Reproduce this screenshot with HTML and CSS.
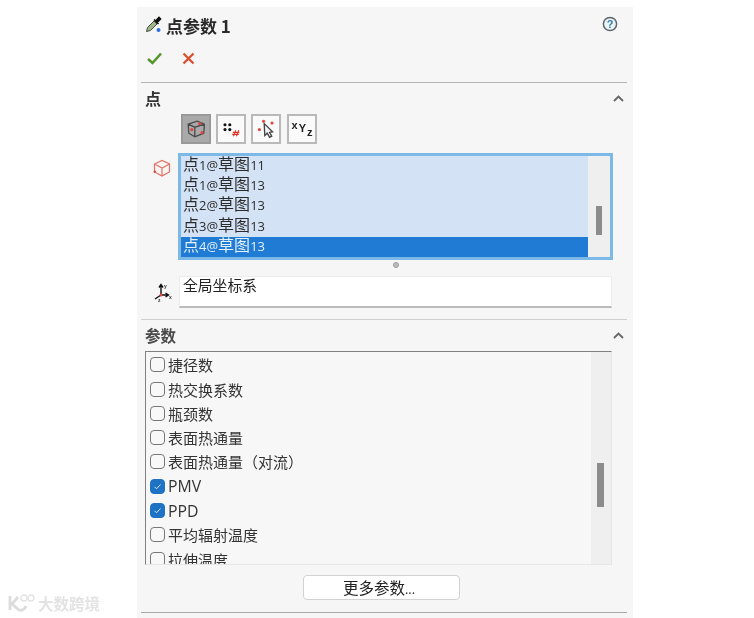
FILE: index.html
```html
<!DOCTYPE html>
<html lang="zh">
<head>
<meta charset="utf-8">
<title>点参数 1</title>
<link rel="stylesheet" href="styles.css">
</head>
<body>
<main class="panel">
  <header class="title">
    <svg class="title-icon" viewBox="0 0 17 18" width="17" height="18">
      <path d="M1.500 15.500 L2.500 11.500 L9 5 L12 8 L5.500 14.500 Z" fill="#9db58a" stroke="#4c4c3c" stroke-width="1"/>
      <path d="M9 3.500 L13.500 8 M10.500 5 L14 1.500 L15.500 3 L12 6.500 Z" fill="#111" stroke="#111" stroke-width="1.600"/>
      <circle cx="13.500" cy="14" r="2" fill="#2f6fe0"/>
    </svg>
    <h1 class="title-text">点参数 1</h1>
    <svg class="help" viewBox="0 0 16 16" width="16" height="16">
      <circle cx="8" cy="8" r="6.600" fill="#eef3f6" stroke="#5c666c" stroke-width="1.500"/>
      <text x="8" y="12" text-anchor="middle" class="help-mark">?</text>
    </svg>
  </header>
  <div class="actions">
    <svg viewBox="0 0 15 13" width="15" height="13"><path d="M1 7 L5.500 11 L14 1.500" fill="none" stroke="#55952b" stroke-width="2.600"/></svg>
    <svg viewBox="0 0 13 13" width="13" height="13"><path d="M1.500 1.500 L11.500 11.500 M11.500 1.500 L1.500 11.500" fill="none" stroke="#d9502f" stroke-width="2.300"/></svg>
  </div>
  <hr class="rule rule-top">
  <div class="section-head">
    <h2 class="section-title">点</h2>
    <svg class="chevron" viewBox="0 0 11 7" width="11" height="7"><path d="M1 6 L5.500 1.500 L10 6" fill="none" stroke="#666" stroke-width="1.800"/></svg>
  </div>
  <div class="tools">
    <button class="tool tool-on">
      <svg viewBox="0 0 20 20" width="24" height="24">
        <path d="M3.500 6 L11 3.500 L17 6 L16.500 13.500 L9 16.500 L4 13.500 Z M3.500 6 L9 8.500 L17 6 M9 8.500 L9 16.500" fill="none" stroke="#4a4a4a" stroke-width="1.100"/>
        <circle cx="6.500" cy="10.500" r="1.300" fill="#e2453c"/><circle cx="13" cy="5.500" r="1.300" fill="#e2453c"/><circle cx="15" cy="13" r="1.300" fill="#e2453c"/>
      </svg>
    </button>
    <button class="tool">
      <svg viewBox="0 0 20 20" width="24" height="24">
        <g fill="#111"><circle cx="5" cy="6.500" r="1.300"/><circle cx="9" cy="6.500" r="1.300"/><circle cx="5" cy="10.500" r="1.300"/><circle cx="9" cy="10.500" r="1.300"/></g>
        <path d="M12 16 L14 11 M14.500 16 L16.500 11 M11.500 12.800 L17 12.800 M11 14.500 L16.500 14.500" stroke="#e5352b" stroke-width="0.900" fill="none"/>
      </svg>
    </button>
    <button class="tool">
      <svg viewBox="0 0 20 20" width="24" height="24">
        <path d="M8.500 5.500 L9 15.500 L11 13.500 L13 17 L14.800 16 L13 12.800 L15.500 12.300 Z" fill="#f4f4f4" stroke="#444" stroke-width="1.100"/>
        <circle cx="4.500" cy="10.500" r="1.300" fill="#e2453c"/><circle cx="8" cy="3.500" r="1.300" fill="#e2453c"/><circle cx="15" cy="5" r="1.300" fill="#e2453c"/>
      </svg>
    </button>
    <button class="tool tool-xyz"><span class="x">x</span><span class="y">Y</span><span class="z">z</span></button>
  </div>

  <div class="select-row">
    <svg class="cube" viewBox="0 0 18 18" width="18" height="18">
      <path d="M1.500 5 L9 1.500 L16.500 5 L16.500 13 L9 17 L1.500 13 Z M1.500 5 L9 9 L16.500 5 M9 9 L9 17" fill="#fdf3f1" stroke="#e07468" stroke-width="1.200"/>
      <circle cx="1.800" cy="12.800" r="1.200" fill="#d9483b"/>
    </svg>
    <div class="selection">
      <ul class="sel-rows">
        <li class="sel-row">点<span class="lat">1@</span>草图<span class="lat">11</span></li>
        <li class="sel-row">点<span class="lat">1@</span>草图<span class="lat">13</span></li>
        <li class="sel-row">点<span class="lat">2@</span>草图<span class="lat">13</span></li>
        <li class="sel-row">点<span class="lat">3@</span>草图<span class="lat">13</span></li>
        <li class="sel-row sel-active">点<span class="lat">4@</span>草图<span class="lat">13</span></li>
      </ul>
      <div class="track track-sel"><div class="thumb thumb-sel"></div></div>
    </div>
  </div>
  <div class="grip-row"><span class="grip"></span></div>

  <div class="coord-row">
    <svg class="axes" viewBox="0 0 20 20" width="20" height="20">
      <path d="M9 13 L9 3 M7 5.500 L9 2.500 L11 5.500 M9 13 L16 13 M13.500 11 L16.500 13 L13.500 15 M9 13 L3 17" fill="none" stroke="#111" stroke-width="1.400"/>
      <circle cx="9" cy="13" r="1.500" fill="#e2453c"/>
      <text x="12" y="6" class="ax">y</text><text x="17" y="17" class="ax">x</text><text x="6" y="20" class="ax">z</text>
    </svg>
    <div class="coord-field">全局坐标系</div>
  </div>
  <hr class="rule rule-mid">

  <div class="section-head section-head-2">
    <h2 class="section-title section-title-2">参数</h2>
    <svg class="chevron" viewBox="0 0 11 7" width="11" height="7"><path d="M1 6 L5.500 1.500 L10 6" fill="none" stroke="#666" stroke-width="1.800"/></svg>
  </div>
  <div class="params">
    <ul class="param-rows">
      <li class="param"><span class="box"></span>捷径数</li>
      <li class="param"><span class="box"></span>热交换系数</li>
      <li class="param"><span class="box"></span>瓶颈数</li>
      <li class="param"><span class="box"></span>表面热通量</li>
      <li class="param"><span class="box"></span>表面热通量（对流）</li>
      <li class="param"><span class="box box-on"><svg viewBox="0 0 15 15" width="15" height="15"><path d="M4.500 7.800 L6.500 9.800 L10.500 5.500" fill="none" stroke="#cfe3f6" stroke-width="1"/></svg></span><span class="param-lat">PMV</span></li>
      <li class="param"><span class="box box-on"><svg viewBox="0 0 15 15" width="15" height="15"><path d="M4.500 7.800 L6.500 9.800 L10.500 5.500" fill="none" stroke="#cfe3f6" stroke-width="1"/></svg></span><span class="param-lat">PPD</span></li>
      <li class="param"><span class="box"></span>平均辐射温度</li>
      <li class="param"><span class="box"></span>拉伸温度</li>
    </ul>
    <div class="track track-params"><div class="thumb thumb-params"></div></div>
  </div>
  <div class="more-row"><button class="more">更多参数<span class="dots">...</span></button></div>
  <hr class="rule rule-end">
</main>
<div class="watermark">
  <svg viewBox="0 0 30 20" width="30" height="20">
    <path d="M3 3 L3 17 M11 4 L5 11 L12 17 C15 18 18 16 19 13" fill="none" stroke="#dcdcdc" stroke-width="2.800"/>
    <circle cx="17" cy="5" r="3" fill="none" stroke="#e2e2e2" stroke-width="1.300"/><circle cx="24" cy="5" r="3" fill="none" stroke="#e2e2e2" stroke-width="1.300"/>
  </svg>
  <span class="wm-text">大数跨境</span>
</div>
</body>
</html>
```
FILE: styles.css
```css
* { box-sizing: border-box; }
html, body { margin: 0; padding: 0; background: #fff; }
body { width: 754px; height: 618px; overflow: hidden; position: relative; font-family: "Noto Sans CJK SC", "Open Sans", sans-serif; color: #222; }
ul { list-style: none; margin: 0; padding: 0; }
h1, h2 { margin: 0; }

.panel { width: 496px; height: 611px; margin: 7px 0 0 137px; background: #f6f6f6; filter: blur(0.35px); display: flex; flex-direction: column; }

.title { height: 36px; display: flex; align-items: center; padding: 0 15px 0 8px; }
.title-icon { flex: none; }
.title-text { font-size: 17px; font-weight: 700; color: #2a2a2a; margin-left: 4px; flex: 1; line-height: 1; }
.help { flex: none; margin-top: -2px; }
.help-mark { font: 700 11px "Liberation Sans", sans-serif; fill: #2f7fa8; }

.actions { height: 30px; display: flex; align-items: center; gap: 20px; padding-left: 10px; }
.rule { border: 0; margin: 0 6px 0 4px; flex: none; }
.rule-top { height: 1px; margin-top: 9px; background: #b4b4b4; }
.rule-mid { height: 1px; margin-top: 11px; background: #cfcfcf; }
.rule-end { height: 1px; margin-top: 12px; background: #a8a8a8; }

.section-head { height: 30px; display: flex; align-items: center; justify-content: space-between; padding: 0 9px 0 8px; }
.section-title { font-size: 16px; font-weight: 700; color: #333; line-height: 1; }
.section-title-2 { font-size: 15.500px; color: #4a4a4a; }
.section-head-2 { height: 31px; }
.chevron { flex: none; }

.tools { display: flex; gap: 5px; padding-left: 44px; margin-top: 1px; height: 30px; }
.tool { width: 30px; height: 30px; padding: 0; background: #fafafa; border: 2px solid #b9b9b9; display: flex; align-items: center; justify-content: center; }
.tool:nth-child(4) { margin-left: 1px; }
.tool-on { background: #a9a9a9; border-color: #999; }
.tool-xyz { font: 700 11px "Liberation Sans", sans-serif; color: #222; align-items: flex-start; padding-top: 3px; }
.y { margin-top: 3px; margin-left: 1px; }
.z { margin-top: 7px; margin-left: 1px; }

.select-row { display: flex; margin-top: 9px; padding-left: 16px; align-items: flex-start; }
.cube { flex: none; margin-top: 6px; }
.selection { width: 435px; height: 107px; margin-left: 7px; border: 3px solid #7db9e6; display: flex; background: #d3e3f5; }
.sel-rows { flex: 1; min-width: 0; }
.sel-row { height: 20.200px; line-height: 14px; font-size: 16px; padding-left: 2px; color: #2b2b2b; white-space: nowrap; }
.sel-active { background: #1f7bd4; color: #e6f1fb; }
.lat { font-family: "Open Sans", sans-serif; font-size: 13px; }

.track { flex: none; background: #efefef; }
.thumb { background: #8c8c8c; }
.track-sel { width: 22px; padding-top: 50px; padding-left: 8px; }
.thumb-sel { width: 6px; height: 29px; }

.grip-row { height: 16px; display: flex; justify-content: flex-start; padding: 2px 0 0 256px; }
.grip { width: 6px; height: 6px; border-radius: 50%; background: #bdbdbd; border: 1px solid #999; }

.coord-row { display: flex; align-items: flex-start; padding-left: 15px; }
.axes { flex: none; margin-top: 6px; }
.coord-field { width: 433px; height: 32px; margin-left: 7px; background: #fff; border: 1px solid #ececec; border-bottom: 2px solid #bbb; font-size: 14.800px; line-height: 15px; padding-left: 3px; color: #222; }
.ax { font: 700 5px "Liberation Sans", sans-serif; fill: #333; }

.params { width: 467px; height: 214px; margin-left: 8px; background: #f7f7f7; border-top: 1px solid #808080; border-left: 1px solid #808080; border-bottom: 1px solid #e6e6e6; border-right: 1px solid #e6e6e6; display: flex; overflow: hidden; }
.param-rows { flex: 1; min-width: 0; padding-top: 0.600px; }
.param { height: 24.300px; display: flex; align-items: center; font-size: 15px; color: #333; padding-left: 4px; white-space: nowrap; gap: 3px; }
.param-lat { font-family: "Open Sans", sans-serif; font-size: 15.800px; }
.box { width: 15px; height: 15px; flex: none; border: 1px solid #777; border-radius: 4px; background: #f8f8f8; display: flex; }
.box-on { background: #1f73c4; border-color: #1f73c4; }
.box-on svg { margin: -1px; }
.track-params { width: 20px; padding-top: 111px; padding-left: 6px; }
.thumb-params { width: 7px; height: 44px; }

.more-row { display: flex; padding-left: 166px; margin-top: 10px; }
.more { width: 157px; height: 25px; background: #fff; border: 1px solid #d2d2d2; border-radius: 4px; font: 15.500px "Noto Sans CJK SC", sans-serif; color: #222; padding: 0 5px 0 0; line-height: 1; }
.dots { font-size: 12px; }

.watermark { position: absolute; left: 7px; top: 593px; display: flex; align-items: center; gap: 1px; }
.wm-text { font-size: 15.500px; font-weight: 700; color: #e3e3e3; line-height: 20px; filter: blur(0.4px); }
```
